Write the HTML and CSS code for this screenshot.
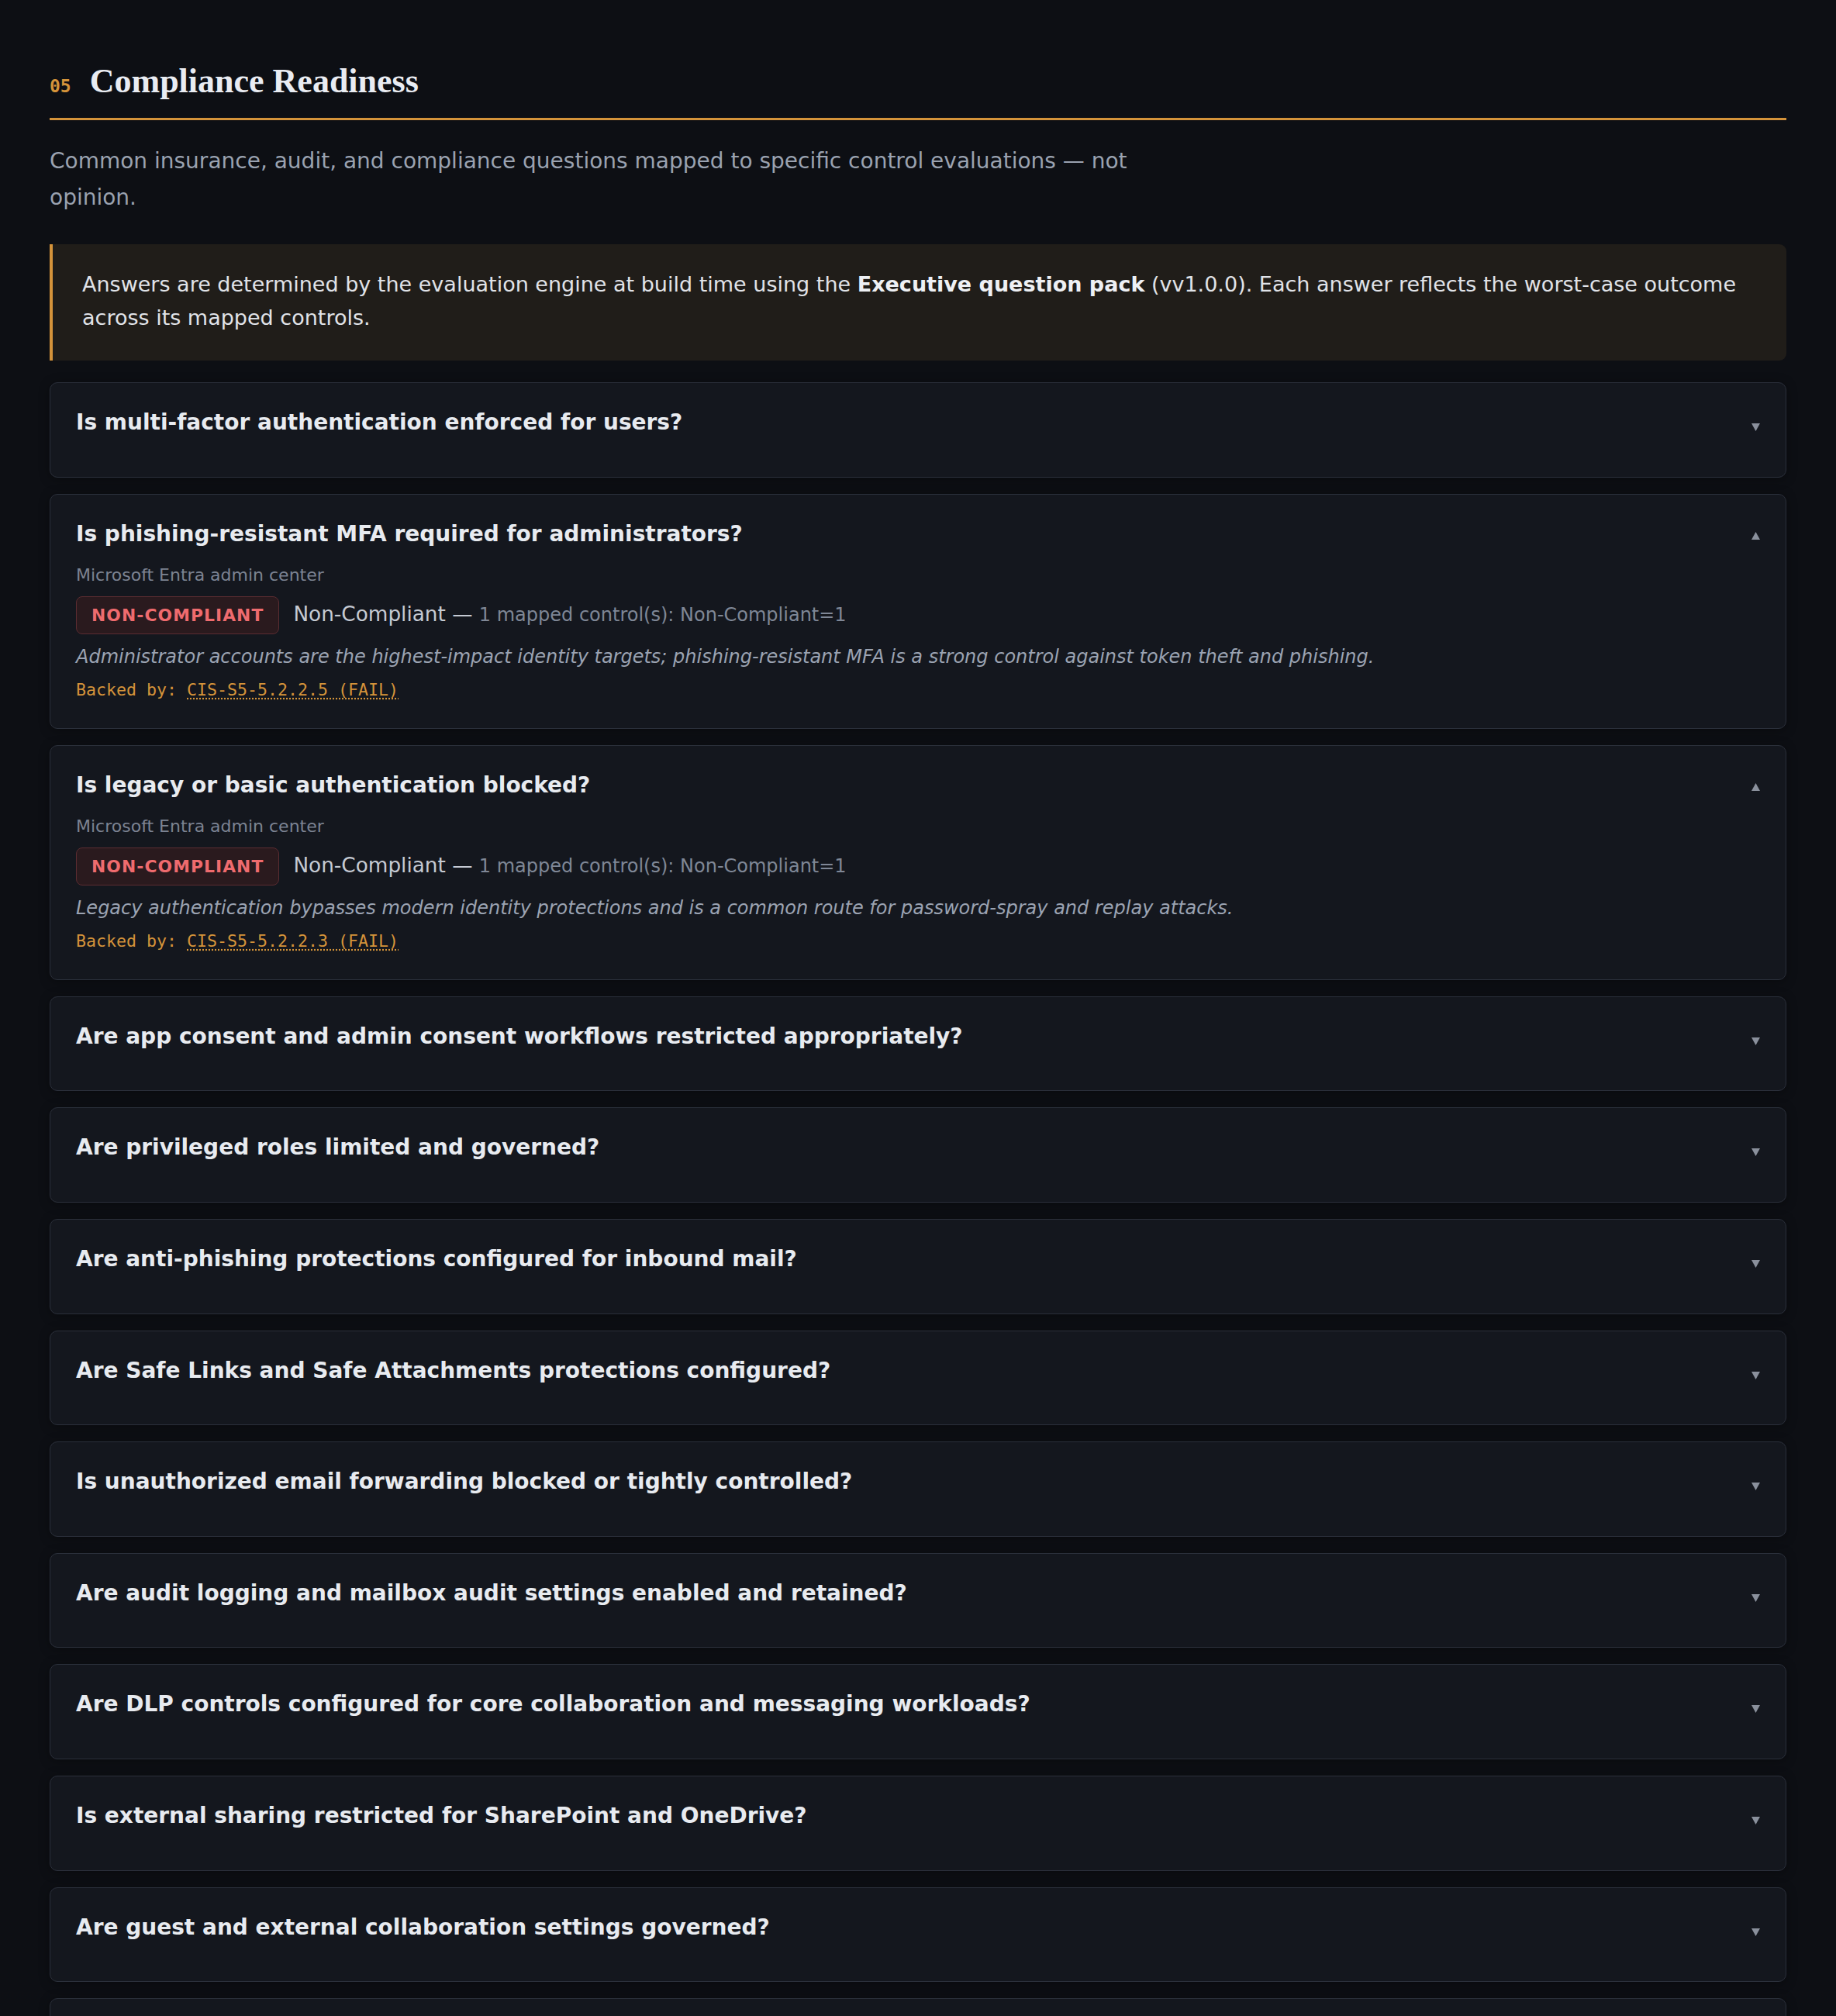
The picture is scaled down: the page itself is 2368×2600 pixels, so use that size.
FILE: index.html
```html
<!DOCTYPE html>
<html lang="en">
<head>
<meta charset="utf-8">
<title>Compliance Readiness</title>
<link rel="stylesheet" href="styles.css">
</head>
<body>
<main class="page">
  <section class="section">
    <header class="section-head">
      <span class="section-num">05</span>
      <h2 class="section-title">Compliance Readiness</h2>
    </header>
    <p class="lead">Common insurance, audit, and compliance questions mapped to specific control evaluations — not opinion.</p>
    <div class="note">Answers are determined by the evaluation engine at build time using the <strong>Executive question pack</strong> (vv1.0.0). Each answer reflects the worst-case outcome across its mapped controls.</div>

    <div class="qlist">
      <details class="q">
        <summary class="q-head"><span class="q-title">Is multi-factor authentication enforced for users?</span><svg class="chev chev-down" width="11" height="10" viewBox="0 0 11 10"><path d="M0 0H11L5.5 10Z"/></svg></summary>
      </details>

      <details class="q" open>
        <summary class="q-head"><span class="q-title">Is phishing-resistant MFA required for administrators?</span><svg class="chev chev-up" width="11" height="10" viewBox="0 0 11 10"><path d="M0 10H11L5.5 0Z"/></svg></summary>
        <div class="q-body">
          <div class="q-meta">Microsoft Entra admin center</div>
          <div class="q-status">
            <span class="badge badge-fail">NON-COMPLIANT</span>
            <span class="status-text">Non-Compliant — <span class="status-detail">1 mapped control(s): Non-Compliant=1</span></span>
          </div>
          <p class="q-why">Administrator accounts are the highest-impact identity targets; phishing-resistant MFA is a strong control against token theft and phishing.</p>
          <div class="q-backed">Backed by: <a class="q-ref" href="#cis-5-2-2-5">CIS-S5-5.2.2.5 (FAIL)</a></div>
        </div>
      </details>

      <details class="q" open>
        <summary class="q-head"><span class="q-title">Is legacy or basic authentication blocked?</span><svg class="chev chev-up" width="11" height="10" viewBox="0 0 11 10"><path d="M0 10H11L5.5 0Z"/></svg></summary>
        <div class="q-body">
          <div class="q-meta">Microsoft Entra admin center</div>
          <div class="q-status">
            <span class="badge badge-fail">NON-COMPLIANT</span>
            <span class="status-text">Non-Compliant — <span class="status-detail">1 mapped control(s): Non-Compliant=1</span></span>
          </div>
          <p class="q-why">Legacy authentication bypasses modern identity protections and is a common route for password-spray and replay attacks.</p>
          <div class="q-backed">Backed by: <a class="q-ref" href="#cis-5-2-2-3">CIS-S5-5.2.2.3 (FAIL)</a></div>
        </div>
      </details>

      <details class="q">
        <summary class="q-head"><span class="q-title">Are app consent and admin consent workflows restricted appropriately?</span><svg class="chev chev-down" width="11" height="10" viewBox="0 0 11 10"><path d="M0 0H11L5.5 10Z"/></svg></summary>
      </details>

      <details class="q">
        <summary class="q-head"><span class="q-title">Are privileged roles limited and governed?</span><svg class="chev chev-down" width="11" height="10" viewBox="0 0 11 10"><path d="M0 0H11L5.5 10Z"/></svg></summary>
      </details>

      <details class="q">
        <summary class="q-head"><span class="q-title">Are anti-phishing protections configured for inbound mail?</span><svg class="chev chev-down" width="11" height="10" viewBox="0 0 11 10"><path d="M0 0H11L5.5 10Z"/></svg></summary>
      </details>

      <details class="q">
        <summary class="q-head"><span class="q-title">Are Safe Links and Safe Attachments protections configured?</span><svg class="chev chev-down" width="11" height="10" viewBox="0 0 11 10"><path d="M0 0H11L5.5 10Z"/></svg></summary>
      </details>

      <details class="q">
        <summary class="q-head"><span class="q-title">Is unauthorized email forwarding blocked or tightly controlled?</span><svg class="chev chev-down" width="11" height="10" viewBox="0 0 11 10"><path d="M0 0H11L5.5 10Z"/></svg></summary>
      </details>

      <details class="q">
        <summary class="q-head"><span class="q-title">Are audit logging and mailbox audit settings enabled and retained?</span><svg class="chev chev-down" width="11" height="10" viewBox="0 0 11 10"><path d="M0 0H11L5.5 10Z"/></svg></summary>
      </details>

      <details class="q">
        <summary class="q-head"><span class="q-title">Are DLP controls configured for core collaboration and messaging workloads?</span><svg class="chev chev-down" width="11" height="10" viewBox="0 0 11 10"><path d="M0 0H11L5.5 10Z"/></svg></summary>
      </details>

      <details class="q">
        <summary class="q-head"><span class="q-title">Is external sharing restricted for SharePoint and OneDrive?</span><svg class="chev chev-down" width="11" height="10" viewBox="0 0 11 10"><path d="M0 0H11L5.5 10Z"/></svg></summary>
      </details>

      <details class="q">
        <summary class="q-head"><span class="q-title">Are guest and external collaboration settings governed?</span><svg class="chev chev-down" width="11" height="10" viewBox="0 0 11 10"><path d="M0 0H11L5.5 10Z"/></svg></summary>
      </details>

      <details class="q">
        <summary class="q-head"><span class="q-title">Are device compliance requirements enforced through Conditional Access?</span><svg class="chev chev-down" width="11" height="10" viewBox="0 0 11 10"><path d="M0 0H11L5.5 10Z"/></svg></summary>
      </details>

      <details class="q">
        <summary class="q-head"><span class="q-title">Are security defaults or baseline policies reviewed regularly?</span><svg class="chev chev-down" width="11" height="10" viewBox="0 0 11 10"><path d="M0 0H11L5.5 10Z"/></svg></summary>
      </details>
    </div>
  </section>
</main>
</body>
</html>
```

FILE: styles.css
```css
* { box-sizing: border-box; }

html, body {
  margin: 0;
  padding: 0;
  background: #0d0f14;
}

body {
  font-family: "DejaVu Sans", "Noto Sans", sans-serif;
  color: #e6e9ef;
}

.page {
  padding: 79px 64px 80px;
}

.section-head {
  display: flex;
  align-items: baseline;
  gap: 24px;
  padding-bottom: 20px;
  border-bottom: 3px solid #d4933a;
}

.section-num {
  font-family: "DejaVu Sans Mono", monospace;
  font-size: 23px;
  font-weight: 700;
  color: #d4933a;
}

.section-title {
  margin: 0;
  font-family: "Liberation Serif", "Times New Roman", serif;
  font-size: 44px;
  line-height: 1.2;
  font-weight: 700;
  color: #e9ecf2;
}

.lead {
  margin: 30.5px 0 37px;
  max-width: 1460px;
  font-size: 28px;
  line-height: 46.5px;
  color: #9aa2b0;
}

.note {
  background: #201d19;
  border-left: 4px solid #d4933a;
  border-radius: 0 9px 9px 0;
  padding: 30px 40px 34px 38px;
  font-size: 27px;
  line-height: 43px;
  color: #e0e3e8;
  margin-bottom: 28px;
}

.note strong {
  font-weight: 700;
  color: #eef0f4;
}

.qlist {
  display: flex;
  flex-direction: column;
  gap: 21px;
}

.q {
  background: #14171e;
  border: 1px solid #2b303b;
  border-radius: 10px;
  padding: 31px 33px 32.6px;
  box-shadow: 0 2px 14px rgba(0, 0, 0, 0.35);
}

.q-head {
  display: flex;
  align-items: flex-start;
  justify-content: space-between;
  list-style: none;
  padding-bottom: 18px;
  cursor: pointer;
}

.q-head::-webkit-details-marker { display: none; }
.q-head::marker { content: ""; }

.q-title {
  font-size: 28px;
  line-height: 39px;
  font-weight: 700;
  color: #e8ebf0;
}

.chev {
  flex: none;
  fill: #8a909c;
}

.chev-down { margin-top: 21px; }
.chev-up { margin-top: 17px; }

.q-body {
  padding-bottom: 1.4px;
}

.q-meta {
  font-size: 22px;
  line-height: 32px;
  color: #7c8392;
}

.q-status {
  display: flex;
  align-items: baseline;
  gap: 18px;
  margin-top: 11px;
}

.badge {
  display: inline-block;
  border-radius: 8px;
  padding: 7px 19px;
  font-size: 21.8px;
  line-height: 33px;
  font-weight: 700;
  letter-spacing: 0.05em;
}

.badge-fail {
  background: #2a1a1e;
  border: 1px solid #5b2c31;
  color: #ef6b6e;
}

.status-text {
  font-size: 26.3px;
  line-height: 33px;
  color: #c5cad3;
}

.status-detail {
  font-size: 24px;
  color: #7f8796;
}

.q-why {
  margin: 12px 0 0;
  font-size: 24px;
  line-height: 35px;
  font-style: italic;
  color: #9ba3b2;
}

.q-backed {
  margin-top: 10px;
  font-family: "DejaVu Sans Mono", monospace;
  font-size: 21.6px;
  line-height: 30px;
  color: #d4933a;
}

.q-ref {
  color: #d4933a;
  text-decoration: underline dotted;
  text-underline-offset: 4px;
}
```
